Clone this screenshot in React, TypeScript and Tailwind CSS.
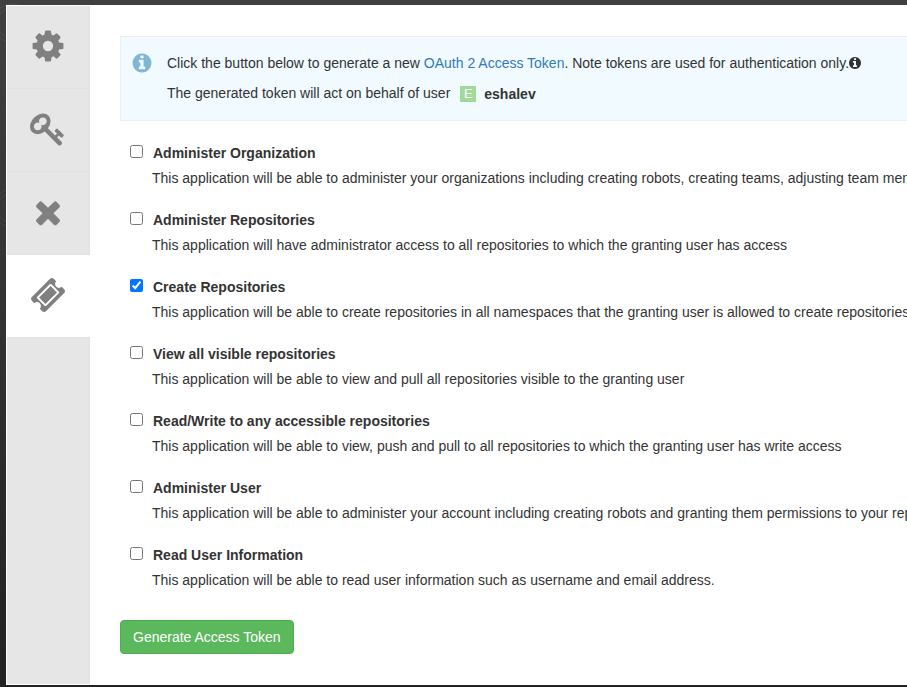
import React from "react";

const paths = {
  gear: "M1152 896q0-106-75-181t-181-75-181 75-75 181 75 181 181 75 181-75 75-181zm512-109v222q0 12-8 23t-20 13l-185 28q-19 54-39 91 35 50 107 138 10 12 10 25t-9 23q-27 37-99 108t-94 71q-12 0-26-9l-138-108q-44 23-91 38-16 136-29 186-7 28-36 28h-222q-14 0-24.5-8.5t-11.5-21.5l-28-184q-49-16-90-37l-141 107q-10 9-25 9-14 0-25-11-126-114-165-168-7-10-7-23 0-12 8-23 15-21 51-66.5t54-70.5q-27-50-41-99l-183-27q-13-2-21-12.5t-8-23.5v-222q0-12 8-23t19-13l186-28q14-46 39-92-40-57-107-138-10-12-10-24 0-10 9-23 26-36 98.5-107.5t94.5-71.5q13 0 26 10l138 107q44-23 91-38 16-136 29-186 7-28 36-28h222q14 0 24.5 8.5t11.5 21.5l28 184q49 16 90 37l142-107q9-9 24-9 13 0 25 10 129 119 165 170 7 8 7 22 0 12-8 23-15 21-51 66.5t-54 70.5q26 50 41 98l183 28q13 2 21 12.5t8 23.5z",
  key: "M832 512q0-80-56-136t-136-56-136 56-56 136q0 42 19 83-41-19-83-19-80 0-136 56t-56 136 56 136 136 56 136-56 56-136q0-42-19-83 41 19 83 19 80 0 136-56t56-136zm851 704q0 17-49 66t-66 49q-9 0-28.5-16t-36.5-33-38.5-40-24.5-26l-96 96 220 220q28 28 28 68 0 42-39 81t-81 39q-40 0-68-28l-671-671q-176 131-365 131-163 0-265.5-102.5t-102.5-265.5q0-160 95-313t248-248 313-95q163 0 265.5 102.5t102.5 265.5q0 189-131 365l355 355 96-96q-3-3-26-24.5t-40-38.5-33-36.5-16-28.5q0-17 49-66t66-49q13 0 23 10 6 6 46 44.5t82 79.5 86.5 86 73 78 28.5 41z",
  times: "M1490 1322q0 40-28 68l-136 136q-28 28-68 28t-68-28l-294-294-294 294q-28 28-68 28t-68-28l-136-136q-28-28-28-68t28-68l294-294-294-294q-28-28-28-68t28-68l136-136q28-28 68-28t68 28l294 294 294-294q28-28 68-28t68 28l136 136q28 28 28 68t-28 68l-294 294 294 294q28 28 28 68z",
  ticket: "M1024 452l316 316-572 572-316-316zm-211 979l618-618q19-19 19-45t-19-45l-362-362q-18-18-45-18t-45 18l-618 618q-19 19-19 45t19 45l362 362q18 18 45 18t45-18zm889-637l-907 908q-37 37-90.5 37t-90.5-37l-126-126q56-56 56-136t-56-136-136-56-136 56l-125-126q-37-37-37-90.5t37-90.5l907-906q37-37 90.5-37t90.5 37l125 125q-56 56-56 136t56 136 136 56 136-56l126 125q37 37 37 90.5t-37 90.5z",
  info: "M1152 1376v-160q0-14-9-23t-23-9h-96v-512q0-14-9-23t-23-9h-320q-14 0-23 9t-9 23v160q0 14 9 23t23 9h96v320h-96q-14 0-23 9t-9 23v160q0 14 9 23t23 9h448q14 0 23-9t9-23zm-128-896v-160q0-14-9-23t-23-9h-192q-14 0-23 9t-9 23v160q0 14 9 23t23 9h192q14 0 23-9t9-23zm640 416q0 209-103 385.5t-279.5 279.5-385.5 103-385.5-103-279.5-279.5-103-385.5 103-385.5 279.5-279.5 385.5-103 385.5 103 279.5 279.5 103 385.5z",
};

type IconName = keyof typeof paths;

function Icon({ name, className }: { name: IconName; className: string }) {
  return (
    <svg viewBox="0 0 1792 1792" fill="currentColor" aria-hidden="true" className={className}>
      <path d={paths[name]} />
    </svg>
  );
}

const tabs: { icon: IconName; active?: boolean }[] = [
  { icon: "gear" },
  { icon: "key" },
  { icon: "times" },
  { icon: "ticket", active: true },
];

const scopes: { title: string; description: string; checked?: boolean }[] = [
  {
    title: "Administer Organization",
    description:
      "This application will be able to administer your organizations including creating robots, creating teams, adjusting team membership",
  },
  {
    title: "Administer Repositories",
    description:
      "This application will have administrator access to all repositories to which the granting user has access",
  },
  {
    title: "Create Repositories",
    description:
      "This application will be able to create repositories in all namespaces that the granting user is allowed to create repositories",
    checked: true,
  },
  {
    title: "View all visible repositories",
    description:
      "This application will be able to view and pull all repositories visible to the granting user",
  },
  {
    title: "Read/Write to any accessible repositories",
    description:
      "This application will be able to view, push and pull to all repositories to which the granting user has write access",
  },
  {
    title: "Administer User",
    description:
      "This application will be able to administer your account including creating robots and granting them permissions to your repositories",
  },
  {
    title: "Read User Information",
    description:
      "This application will be able to read user information such as username and email address.",
  },
];

function Sidebar() {
  return (
    <nav className="mt-px mb-px ml-px flex w-[83px] shrink-0 flex-col">
      {tabs.map((tab) => (
        <a
          key={tab.icon}
          className={
            tab.active
              ? "flex h-[83px] items-center justify-center border-b border-[#dde4e8] bg-white pr-px pb-0.5 text-[#808080]"
              : "flex h-[83px] items-center justify-center border-r border-b border-[#dde4e8] bg-[#e6e6e6] pb-0.5 text-[#808080]"
          }
        >
          <Icon name={tab.icon} className="size-9" />
        </a>
      ))}
      <div className="flex-1 border-r border-[#dde4e8] bg-[#e6e6e6]" />
    </nav>
  );
}

function Notice() {
  return (
    <div className="flex h-[85px] border border-[#eee] bg-[#f0faff] pt-[11px] pl-2.5 leading-[30px] whitespace-nowrap">
      <Icon name="info" className="mt-[4px] mr-3.5 size-[22px] shrink-0 text-[#82b7d4]" />
      <div>
        <div className="flex">
          <span>
            Click the button below to generate a new{" "}
            <a className="text-[#337ab7]">OAuth 2 Access Token</a>. Note tokens are used for
            authentication only.
          </span>
          <Icon name="info" className="mt-[8px] -ml-px size-[14px] text-[#333]" />
        </div>
        <div className="flex">
          <span>The generated token will act on behalf of user</span>
          <span className="mt-[8px] ml-[10px] flex size-4 items-center justify-center bg-[#a1d99b] text-[13px] leading-4 text-white">
            E
          </span>
          <b className="mt-px ml-2">eshalev</b>
        </div>
      </div>
    </div>
  );
}

export default function App() {
  return (
    <div className="relative h-[687px] w-[907px] overflow-hidden bg-linear-to-b from-[#404040] to-[#222] pt-[5px] pl-1.5 font-['Liberation_Sans',Arial,sans-serif] text-[14px] leading-5 text-[#333]">
      <svg
        className="absolute top-0 left-0 h-full w-full"
        fill="none"
        stroke="#fff"
        strokeOpacity="0.07"
        aria-hidden="true"
      >
        <circle cx="12" cy="23" r="19" />
        <circle cx="12" cy="23" r="15" />
        <circle cx="12" cy="208" r="19" />
        <circle cx="12" cy="208" r="15" />
      </svg>
      <div className="relative flex h-[680px] overflow-hidden bg-white">
        <Sidebar />
        <main className="w-[860px] shrink-0 pt-[31px] pl-[30px]">
          <Notice />
          <div className="mt-[22px] pl-[10px]">
            {scopes.map((scope) => (
              <div key={scope.title} className="h-[67px] whitespace-nowrap">
                <label className="flex">
                  <input
                    type="checkbox"
                    defaultChecked={scope.checked}
                    className="mt-[2px] mr-[10px] size-[13px]"
                  />
                  <b>{scope.title}</b>
                </label>
                <div className="mt-[5px] pl-[22px]">{scope.description}</div>
              </div>
            ))}
          </div>
          <button className="mt-[8px] h-[34px] rounded border border-[#4cae4c] bg-[#5cb85c] px-3 text-white">
            Generate Access Token
          </button>
        </main>
      </div>
    </div>
  );
}
